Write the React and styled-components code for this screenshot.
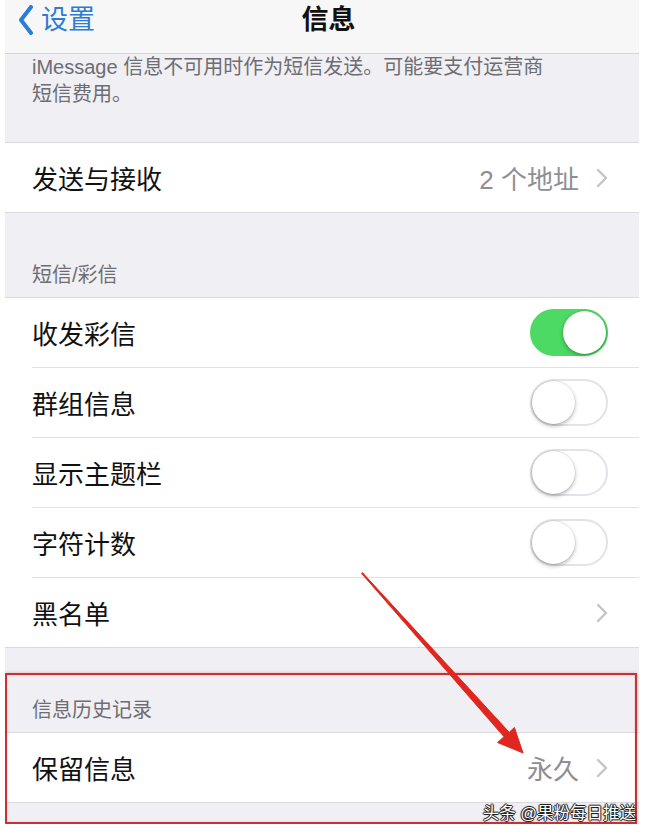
import React from "react";
import styled, { createGlobalStyle } from "styled-components";

const GlobalStyle = createGlobalStyle`
  html, body {
    margin: 0;
    padding: 0;
    background: #ffffff;
  }
  body {
    font-family: "Liberation Sans", "Noto Sans CJK SC", sans-serif;
    -webkit-font-smoothing: antialiased;
  }
  *, *::before, *::after {
    box-sizing: border-box;
  }
`;

const Screen = styled.div`
  position: relative;
  margin-left: 5px;
  width: 634px;
  background: #efeff4;
  overflow: hidden;
`;

const NavBar = styled.header`
  display: grid;
  grid-template-columns: 1fr auto 1fr;
  align-items: start;
  height: 54px;
  padding: 4px 0 0 13px;
  background: #f7f7f8;
  border-bottom: 1px solid #d4d4d9;
`;

const BackButton = styled.div`
  display: flex;
  align-items: center;
  gap: 7px;
  color: #2b7bd8;
  font-size: 27px;
  line-height: 32px;
`;

const Title = styled.h1`
  margin: 0;
  font-size: 27px;
  font-weight: 600;
  line-height: 32px;
  color: #111;
`;

const FooterNote = styled.p`
  margin: 0;
  padding: 0 20px 34px 27px;
  font-size: 20px;
  line-height: 27px;
  color: #6d6d72;
`;

const SectionHeader = styled.div`
  padding: 50px 27px 10px;
  font-size: 20px;
  line-height: 24px;
  color: #6d6d72;
`;

const Group = styled.div`
  background: #ffffff;
  border-top: 1px solid #dadade;
  border-bottom: 1px solid #dadade;
`;

const Row = styled.div`
  padding-left: 27px;
`;

const RowInner = styled.div`
  display: flex;
  align-items: center;
  height: 69px;
  padding-right: 31px;

  ${Row} + ${Row} & {
    height: 70px;
    border-top: 1px solid #e2e2e6;
  }
`;

const Label = styled.span`
  flex: 1;
  font-size: 26px;
  color: #111;
`;

const Value = styled.span`
  margin-right: 17px;
  font-size: 26px;
  color: #8e8e93;
`;

const Switch = styled.span`
  display: flex;
  justify-content: ${(p) => (p.$on ? "flex-end" : "flex-start")};
  align-items: center;
  width: 78px;
  height: 47px;
  border-radius: 24px;
  background: ${(p) => (p.$on ? "#4cd964" : "#ffffff")};
  border: 2px solid ${(p) => (p.$on ? "#4cd964" : "#e3e3e7")};
`;

const Knob = styled.span`
  width: 43px;
  height: 43px;
  border-radius: 50%;
  background: #ffffff;
  box-shadow: 0 2px 4px rgba(0, 0, 0, 0.28), 0 0 0 0.5px rgba(0, 0, 0, 0.12);
`;

const Tail = styled.div`
  height: 21px;
`;

const HistoryBlock = styled.section`
  position: relative;

  &::after {
    content: "";
    position: absolute;
    top: 25px;
    left: 0;
    right: 2px;
    bottom: 0;
    border: 2px solid #c9302f;
    box-shadow: 0 0 3px rgba(230, 90, 90, 0.45), inset 0 0 2px rgba(230, 90, 90, 0.35);
    pointer-events: none;
  }
`;

const ArrowLayer = styled.svg`
  position: absolute;
  top: 0;
  left: 0;
  width: 100%;
  height: 100%;
  pointer-events: none;
`;

const Watermark = styled.span`
  position: absolute;
  right: 3px;
  bottom: 1px;
  font-size: 16.5px;
  line-height: 20px;
  color: #ffffff;
  text-shadow: -1px 0 #222, 1px 0 #222, 0 -1px #222, 0 1px #222, 0 0 2px #000;
`;

const Chevron = () => (
  <svg width="12" height="20" viewBox="0 0 12 20">
    <path d="M2 2 L10 10 L2 18" fill="none" stroke="#c4c4c9" strokeWidth="2.4" strokeLinecap="round" strokeLinejoin="round" />
  </svg>
);

const BackChevron = () => (
  <svg width="16" height="30" viewBox="0 0 16 30">
    <path d="M13 2 L3 15 L13 28" fill="none" stroke="#2b7bd8" strokeWidth="4" strokeLinecap="round" strokeLinejoin="round" />
  </svg>
);

const toggles = [
  { label: "收发彩信", on: true },
  { label: "群组信息", on: false },
  { label: "显示主题栏", on: false },
  { label: "字符计数", on: false },
];

export default function App() {
  return (
    <>
      <GlobalStyle />
      <Screen>
        <NavBar>
          <BackButton>
            <BackChevron />
            设置
          </BackButton>
          <Title>信息</Title>
        </NavBar>

        <FooterNote>
          iMessage 信息不可用时作为短信发送。可能要支付运营商
          <br />
          短信费用。
        </FooterNote>

        <Group>
          <Row>
            <RowInner>
              <Label>发送与接收</Label>
              <Value>2 个地址</Value>
              <Chevron />
            </RowInner>
          </Row>
        </Group>

        <SectionHeader>短信/彩信</SectionHeader>
        <Group>
          {toggles.map((t) => (
            <Row key={t.label}>
              <RowInner>
                <Label>{t.label}</Label>
                <Switch $on={t.on}>
                  <Knob />
                </Switch>
              </RowInner>
            </Row>
          ))}
          <Row>
            <RowInner>
              <Label>黑名单</Label>
              <Chevron />
            </RowInner>
          </Row>
        </Group>

        <HistoryBlock>
          <SectionHeader>信息历史记录</SectionHeader>
          <Group>
            <Row>
              <RowInner>
                <Label>保留信息</Label>
                <Value>永久</Value>
                <Chevron />
              </RowInner>
            </Row>
          </Group>
          <Tail />
        </HistoryBlock>

        <ArrowLayer viewBox="0 0 634 824" preserveAspectRatio="none">
          <polygon
            points="356.6,573.4 499.0,736.7 492.6,742.5 518,753 509.4,727.5 504.2,732.3 357.4,572.6"
            fill="#e0271f"
            stroke="#e0271f"
            strokeWidth="1"
            strokeLinejoin="round"
          />
        </ArrowLayer>

        <Watermark>头条 @果粉每日推送</Watermark>
      </Screen>
    </>
  );
}
